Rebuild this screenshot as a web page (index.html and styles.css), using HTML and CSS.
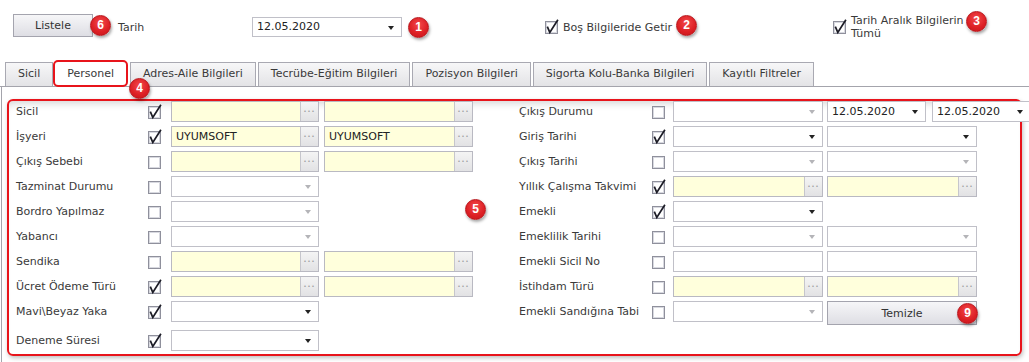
FILE: index.html
```html
<!DOCTYPE html>
<html lang="tr">
  <head>
    <meta charset="UTF-8" />
    <title>Personel Filtre</title>
    <link rel="stylesheet" href="styles.css">
  </head>
  <body>
    <svg class="defs" width="0" height="0">
      <symbol id="cb-off" viewBox="0 0 14 16">
        <rect x="0.5" y="2.5" width="12" height="12" fill="#fff" stroke="#8f909c" />
        <rect x="1.5" y="3.5" width="10" height="10" fill="none" stroke="#d8d9e0" />
      </symbol>
      <symbol id="cb-on" viewBox="0 0 14 16">
        <rect x="0.5" y="2.5" width="12" height="12" fill="#fff" stroke="#8f909c" />
        <rect x="1.5" y="3.5" width="10" height="10" fill="none" stroke="#d8d9e0" />
        <path d="M2.3 7.6 L4.8 13.4 L12.9 0.8" fill="none" stroke="#1c1c26" stroke-width="1.7" />
      </symbol>
    </svg>

    <!-- toolbar -->
    <div class="toolbar">
      <button class="btn btn-list">Listele<span class="badge b6">6</span></button>
      <span class="tb-label">Tarih</span>
      <div class="combo date-main">12.05.2020<span class="badge b1">1</span></div>
      <label class="tb-check chk-empty">
        <svg class="cb"><use href="#cb-on" /></svg>
        <span>Boş Bilgileride Getir</span>
        <span class="badge b2">2</span>
      </label>
      <label class="tb-check chk-range">
        <svg class="cb"><use href="#cb-on" /></svg>
        <span class="wrap">Tarih Aralık Bilgilerin Tümü</span>
        <span class="badge b3">3</span>
      </label>
    </div>

    <!-- tabs -->
    <div class="tabs">
      <div class="tab">Sicil</div>
      <div class="tab active">Personel<span class="badge b4">4</span></div>
      <div class="tab">Adres-Aile Bilgileri</div>
      <div class="tab">Tecrübe-Eğitim Bilgileri</div>
      <div class="tab">Pozisyon Bilgileri</div>
      <div class="tab">Sigorta Kolu-Banka Bilgileri</div>
      <div class="tab">Kayıtlı Filtreler</div>
    </div>

    <div class="panel">
      <div class="form-box">
        <span class="badge b5">5</span>

        <div class="col col-left">
          <div class="row">
            <span class="lbl">Sicil</span>
            <svg class="cb"><use href="#cb-on" /></svg>
            <div class="f lookup"><span class="val"></span><span class="dots">•••</span></div>
            <div class="f lookup"><span class="val"></span><span class="dots">•••</span></div>
          </div>
          <div class="row">
            <span class="lbl">İşyeri</span>
            <svg class="cb"><use href="#cb-on" /></svg>
            <div class="f lookup"><span class="val">UYUMSOFT</span><span class="dots">•••</span></div>
            <div class="f lookup"><span class="val">UYUMSOFT</span><span class="dots">•••</span></div>
          </div>
          <div class="row">
            <span class="lbl">Çıkış Sebebi</span>
            <svg class="cb"><use href="#cb-off" /></svg>
            <div class="f lookup"><span class="val"></span><span class="dots">•••</span></div>
            <div class="f lookup"><span class="val"></span><span class="dots">•••</span></div>
          </div>
          <div class="row">
            <span class="lbl">Tazminat Durumu</span>
            <svg class="cb"><use href="#cb-off" /></svg>
            <div class="f combo disabled"></div>
          </div>
          <div class="row">
            <span class="lbl">Bordro Yapılmaz</span>
            <svg class="cb"><use href="#cb-off" /></svg>
            <div class="f combo disabled"></div>
          </div>
          <div class="row">
            <span class="lbl">Yabancı</span>
            <svg class="cb"><use href="#cb-off" /></svg>
            <div class="f combo disabled"></div>
          </div>
          <div class="row">
            <span class="lbl">Sendika</span>
            <svg class="cb"><use href="#cb-off" /></svg>
            <div class="f lookup"><span class="val"></span><span class="dots">•••</span></div>
            <div class="f lookup"><span class="val"></span><span class="dots">•••</span></div>
          </div>
          <div class="row">
            <span class="lbl">Ücret Ödeme Türü</span>
            <svg class="cb"><use href="#cb-on" /></svg>
            <div class="f lookup"><span class="val"></span><span class="dots">•••</span></div>
            <div class="f lookup"><span class="val"></span><span class="dots">•••</span></div>
          </div>
          <div class="row">
            <span class="lbl">Mavi\Beyaz Yaka</span>
            <svg class="cb"><use href="#cb-on" /></svg>
            <div class="f combo"></div>
          </div>
          <div class="row row-last">
            <span class="lbl">Deneme Süresi</span>
            <svg class="cb"><use href="#cb-on" /></svg>
            <div class="f combo"></div>
          </div>
        </div>

        <div class="col col-right">
          <div class="row">
            <span class="lbl">Çıkış Durumu</span>
            <svg class="cb"><use href="#cb-off" /></svg>
            <div class="f combo disabled"></div>
            <div class="dates">
              <div class="combo date">12.05.2020</div>
              <div class="combo date">12.05.2020</div>
            </div>
          </div>
          <div class="row">
            <span class="lbl">Giriş Tarihi</span>
            <svg class="cb"><use href="#cb-on" /></svg>
            <div class="f combo"></div>
            <div class="f combo"></div>
          </div>
          <div class="row">
            <span class="lbl">Çıkış Tarihi</span>
            <svg class="cb"><use href="#cb-off" /></svg>
            <div class="f combo disabled"></div>
            <div class="f combo disabled"></div>
          </div>
          <div class="row">
            <span class="lbl">Yıllık Çalışma Takvimi</span>
            <svg class="cb"><use href="#cb-on" /></svg>
            <div class="f lookup"><span class="val"></span><span class="dots">•••</span></div>
            <div class="f lookup"><span class="val"></span><span class="dots">•••</span></div>
          </div>
          <div class="row">
            <span class="lbl">Emekli</span>
            <svg class="cb"><use href="#cb-on" /></svg>
            <div class="f combo"></div>
          </div>
          <div class="row">
            <span class="lbl">Emeklilik Tarihi</span>
            <svg class="cb"><use href="#cb-off" /></svg>
            <div class="f combo disabled"></div>
            <div class="f combo disabled"></div>
          </div>
          <div class="row">
            <span class="lbl">Emekli Sicil No</span>
            <svg class="cb"><use href="#cb-off" /></svg>
            <div class="f text"></div>
            <div class="f text"></div>
          </div>
          <div class="row">
            <span class="lbl">İstihdam Türü</span>
            <svg class="cb"><use href="#cb-off" /></svg>
            <div class="f lookup"><span class="val"></span><span class="dots">•••</span></div>
            <div class="f lookup"><span class="val"></span><span class="dots">•••</span></div>
          </div>
          <div class="row">
            <span class="lbl">Emekli Sandığına Tabi</span>
            <svg class="cb"><use href="#cb-off" /></svg>
            <div class="f combo disabled"></div>
            <button class="f btn btn-clear">Temizle<span class="badge b9">9</span></button>
          </div>
        </div>
      </div>
    </div>
  </body>
</html>
```

FILE: styles.css
```css
* {
  margin: 0;
  padding: 0;
  box-sizing: border-box;
}

body {
  font-family: "DejaVu Sans", Verdana, sans-serif;
  font-size: 11px;
  color: #3a3a3a;
  background: #fff;
  width: 1029px;
  height: 362px;
  overflow: hidden;
}

.defs {
  position: absolute;
  width: 0;
  height: 0;
}

/* annotation badges */
.badge {
  position: absolute;
  width: 21px;
  height: 21px;
  border-radius: 50%;
  background: radial-gradient(circle at 50% 35%, #f3494b 0%, #dc1f24 60%, #c4161b 100%);
  border: 1px solid #b8141a;
  box-shadow: 1px 2px 3px rgba(0, 0, 0, 0.35);
  color: #fff;
  font-family: "Liberation Sans", Arial, sans-serif;
  font-weight: bold;
  font-size: 12px;
  line-height: 19px;
  text-align: center;
  z-index: 5;
}

.b6 { left: 76px; top: 0px; }
.b1 { left: 155px; top: -1px; }
.b2 { left: 131px; top: -4px; }
.b3 { left: 133px; top: -3px; }
.b4 { left: 74px; top: 16px; }
.b5 { left: 456px; top: 98px; }
.b9 { left: 129px; top: 1px; }

/* toolbar */
.toolbar {
  display: flex;
  align-items: center;
  height: 26px;
  margin: 14px 0 22px 13px;
}

.btn {
  position: relative;
  font-family: inherit;
  font-size: 11px;
  color: #333;
  background: linear-gradient(#f6f6f8, #dedee4);
  border: 1px solid #a4a4ae;
  cursor: pointer;
}

.btn-list {
  width: 80px;
  height: 23px;
  margin-top: -3px;
}

.tb-label {
  margin-left: 25px;
  width: 134px;
}

.combo {
  position: relative;
  height: 21px;
  background: #fff;
  border: 1px solid #c0c0c8;
  line-height: 19px;
  padding-left: 4px;
  color: #222;
}

.combo::after {
  content: "";
  position: absolute;
  right: 7px;
  top: 8px;
  border-left: 3.5px solid transparent;
  border-right: 3.5px solid transparent;
  border-top: 4px solid #222;
}

.combo.disabled::after {
  border-top-color: #b4b4b8;
}

.date-main {
  width: 150px;
  height: 20px;
  line-height: 18px;
}

.tb-check {
  position: relative;
  display: flex;
  align-items: center;
  gap: 4px;
}

.chk-empty {
  margin-left: 143px;
  width: 288px;
}

.chk-range .wrap {
  width: 118px;
  line-height: 13px;
}

.cb {
  display: block;
  width: 14px;
  height: 16px;
  flex: none;
  overflow: visible;
}

/* tabs */
.tabs {
  display: flex;
  align-items: flex-end;
  height: 25px;
  padding-left: 5px;
  border-bottom: 1px solid #a4a4ac;
}

.tab {
  position: relative;
  height: 24px;
  margin-right: 2px;
  padding: 0 12px;
  line-height: 22px;
  background: linear-gradient(#f7f7f8, #e3e3e6);
  border: 1px solid #a9a9b2;
  border-bottom: none;
  white-space: nowrap;
}

.tab.active {
  height: 27px;
  margin-bottom: -1px;
  margin-left: -2px;
  background: #fff;
  border: 2px solid #e8141b;
  border-radius: 5px;
  line-height: 23px;
}

/* panel */
.panel {
  margin-left: 1px;
  height: 275px;
  padding: 12px 7px 0 5px;
  border-left: 1px solid #a4a4ac;
}

.form-box {
  position: relative;
  display: flex;
  height: 257px;
  border: 2px solid #e8141b;
  border-radius: 6px;
  box-shadow: 1px 2px 4px rgba(0, 0, 0, 0.25), inset 0 8px 8px -6px rgba(0, 0, 0, 0.18);
}

.col-left {
  flex: 0 0 510px;
  padding-left: 7px;
}

.col-right {
  flex: 1;
}

.row {
  display: flex;
  align-items: center;
  height: 21px;
  margin-bottom: 4px;
}

.row-last {
  margin-top: 8px;
}

.lbl {
  white-space: nowrap;
}

.col-left .lbl {
  width: 132px;
}

.col-left .cb {
  margin-right: 9px;
}

.col-left .f {
  width: 148px;
}

.col-left .f + .f {
  width: 149px;
  margin-left: 5px;
}

.col-right .lbl {
  width: 133px;
}

.col-right .cb {
  margin-right: 7px;
}

.col-right .f {
  width: 150px;
}

.col-right .f + .f,
.col-right .dates {
  margin-left: 4px;
}

.lookup {
  display: flex;
  height: 21px;
  border: 1px solid #b9b9c2;
  background: #ffffdc;
}

.lookup .val {
  flex: 1;
  padding-left: 4px;
  line-height: 19px;
  color: #222;
}

.lookup .dots {
  width: 18px;
  border-left: 1px solid #c6c6cc;
  background: linear-gradient(#f4f4f4, #e2e2e4);
  color: #8c8c90;
  font-size: 5px;
  letter-spacing: 1px;
  line-height: 19px;
  text-align: center;
}

.text {
  height: 21px;
  border: 1px solid #c0c0c8;
  background: #fff;
}

.dates {
  display: flex;
  gap: 6px;
}

.date {
  width: 99px;
  flex: none;
}

.btn-clear {
  height: 24px;
  margin-top: 3px;
}
```
